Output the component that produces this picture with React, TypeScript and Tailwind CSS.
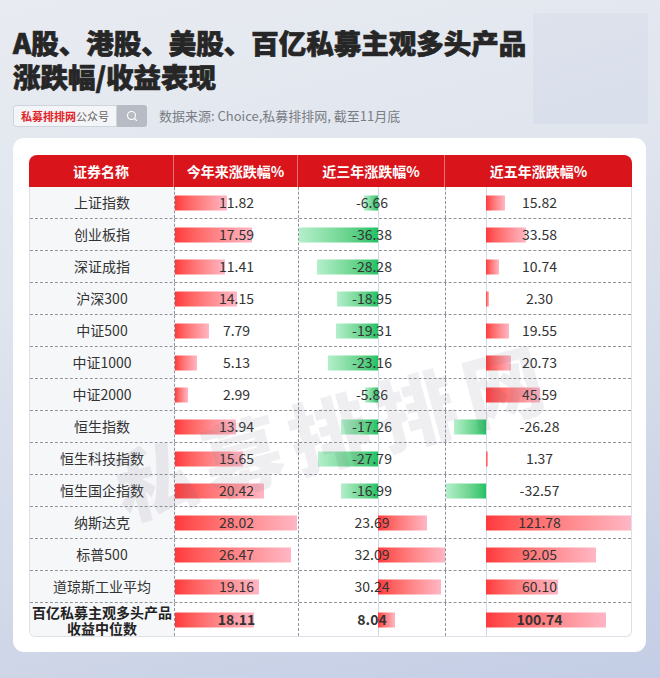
import React from 'react';
import { Search } from 'lucide-react';

type Row = { name: string; ytd: string; y3: string; y5: string };

const ROWS: Row[] = [
  { name: '上证指数', ytd: '11.82', y3: '-6.66', y5: '15.82' },
  { name: '创业板指', ytd: '17.59', y3: '-36.38', y5: '33.58' },
  { name: '深证成指', ytd: '11.41', y3: '-28.28', y5: '10.74' },
  { name: '沪深300', ytd: '14.15', y3: '-18.95', y5: '2.30' },
  { name: '中证500', ytd: '7.79', y3: '-19.31', y5: '19.55' },
  { name: '中证1000', ytd: '5.13', y3: '-23.16', y5: '20.73' },
  { name: '中证2000', ytd: '2.99', y3: '-5.86', y5: '45.59' },
  { name: '恒生指数', ytd: '13.94', y3: '-17.26', y5: '-26.28' },
  { name: '恒生科技指数', ytd: '15.65', y3: '-27.79', y5: '1.37' },
  { name: '恒生国企指数', ytd: '20.42', y3: '-16.99', y5: '-32.57' },
  { name: '纳斯达克', ytd: '28.02', y3: '23.69', y5: '121.78' },
  { name: '标普500', ytd: '26.47', y3: '32.09', y5: '92.05' },
  { name: '道琼斯工业平均', ytd: '19.16', y3: '30.24', y5: '60.10' },
];

// axis offset inside the column + px per percentage point
const SCALES = {
  ytd: { axis: 0, pos: 4.37, neg: 4.37, line: false },
  y3: { axis: 79, pos: 2.08, neg: 2.17, line: true },
  y5: { axis: 40, pos: 1.19, neg: 1.22, line: true },
};

function BarCell({
  value,
  scale,
  bold,
  last,
}: {
  value: string;
  scale: { axis: number; pos: number; neg: number; line: boolean };
  bold?: boolean;
  last?: boolean;
}) {
  const v = parseFloat(value);
  const w = Math.abs(v) * (v >= 0 ? scale.pos : scale.neg);
  const style = v >= 0 ? { left: scale.axis, width: w } : { left: scale.axis - w, width: w };
  return (
    <div
      className={`relative flex items-center justify-center overflow-hidden ${
        last ? '' : 'border-r border-dashed border-[#8e949e]'
      }`}
    >
      {scale.line && (
        <div className="absolute top-0 bottom-0 w-px bg-[#d3d9e2]" style={{ left: scale.axis }} />
      )}
      <div
        className={`absolute top-1/2 -translate-y-1/2 h-[15px] ${
          v >= 0
            ? 'bg-gradient-to-r from-[#ff383c] to-[#ffb6c4]'
            : 'bg-gradient-to-r from-[#b3efcb] to-[#1cc265]'
        }`}
        style={style}
      />
      <span className={`relative text-[14px] text-[#333] ${bold ? 'font-bold text-[#222]' : ''}`}>
        {value}
      </span>
    </div>
  );
}

const COLS = 'grid grid-cols-[145px_124px_147px_187px]';

export default function App() {
  return (
    <div className="relative w-[660px] h-[678px] overflow-hidden bg-[linear-gradient(165deg,#e8ebf1_0%,#e0e5ee_35%,#d2d9e8_70%,#c3cde5_100%)] font-['Noto_Sans_CJK_SC','Noto_Sans',sans-serif]">
      {/* faint block top right */}
      <div className="absolute left-[533px] top-[13px] w-[115px] h-[111px] bg-[#b4c2dc]/15" />

      <div className="relative pl-[13px] pt-[25px]">
        <h1 className="text-[27.5px] leading-[34px] font-black text-[#262626] [-webkit-text-stroke:0.7px_#262626]">
          A股、港股、美股、百亿私募主观多头产品
          <br />
          涨跌幅/收益表现
        </h1>

        <div className="mt-[12px] flex items-center h-[22px]">
          <div className="flex h-full">
            <div className="flex items-center h-full px-[7px] bg-[#f4f5f8] border border-[#cfd3da] rounded-l-[3px] text-[11px] leading-none">
              <span className="font-bold text-[#e0262b]">私募排排网</span>
              <span className="text-[#666]">公众号</span>
            </div>
            <div className="flex items-center justify-center w-[30px] h-full bg-[#b7bbc3] rounded-r-[3px]">
              <Search size={12} color="#fff" strokeWidth={2.2} />
            </div>
          </div>
          <span className="ml-[12px] text-[13px] text-[#7a7d84]">数据来源: Choice,私募排排网, 截至11月底</span>
        </div>

        <div className="relative mt-[11px] w-[633px] h-[514px] bg-white rounded-[11px] pt-[17px] pl-[16px]">
          <div className="w-[603px]">
            {/* header */}
            <div className={`${COLS} h-[32px] bg-[#d9151b] rounded-t-[8px] text-white text-[14px] font-bold`}>
              {['证券名称', '今年来涨跌幅%', '近三年涨跌幅%', '近五年涨跌幅%'].map((t, i) => (
                <div
                  key={t}
                  className={`flex items-center justify-center ${i < 3 ? 'border-r border-white/40' : ''}`}
                >
                  {t}
                </div>
              ))}
            </div>

            {/* body */}
            <div className="border-x border-b border-[#dde1e7] rounded-b-[6px] overflow-hidden">
              {ROWS.map((r) => (
                <div key={r.name} className={`${COLS} h-[32px] border-b border-dashed border-[#8e949e]`}>
                  <div className="flex items-center justify-center bg-[#f6f7f9] border-r border-dashed border-[#8e949e] text-[14px] text-[#333]">
                    {r.name}
                  </div>
                  <BarCell value={r.ytd} scale={SCALES.ytd} />
                  <BarCell value={r.y3} scale={SCALES.y3} />
                  <BarCell value={r.y5} scale={SCALES.y5} last />
                </div>
              ))}
              <div className={`${COLS} h-[33px]`}>
                <div className="flex flex-col items-center justify-center bg-[#f6f7f9] border-r border-dashed border-[#8e949e] text-[14px] leading-[16px] font-bold text-[#222]">
                  <span>百亿私募主观多头产品</span>
                  <span>收益中位数</span>
                </div>
                <BarCell value="18.11" scale={SCALES.ytd} bold />
                <BarCell value="8.04" scale={SCALES.y3} bold />
                <BarCell value="100.74" scale={SCALES.y5} bold last />
              </div>
            </div>
          </div>

          {/* watermark */}
          <div className="pointer-events-none absolute left-[40px] top-[250px] w-[560px] text-center -rotate-[15deg] text-[80px] leading-none font-black tracking-[10px] text-[#6b7080]/[0.11]">
            私募排排网
          </div>
        </div>
      </div>
    </div>
  );
}
